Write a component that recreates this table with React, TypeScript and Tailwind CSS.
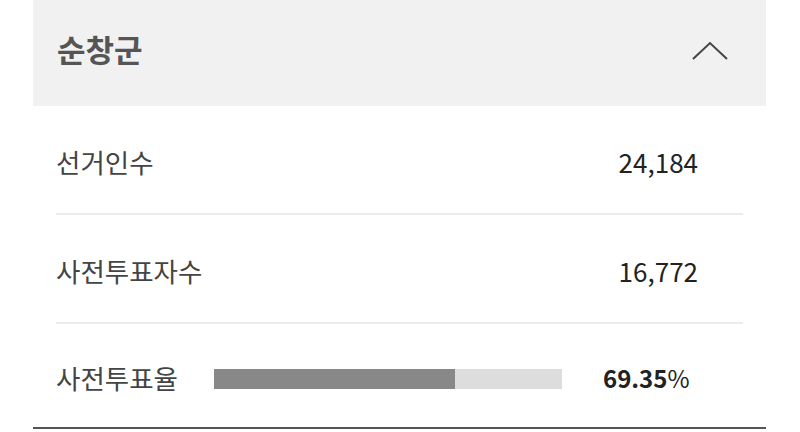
import React from "react";

const font = { fontFamily: '"Noto Sans CJK KR", "Noto Sans", sans-serif' };

function Row({ label, value }: { label: string; value: string }) {
  return (
    <div className="mx-[23px] flex h-[109px] items-center justify-between border-b-2 border-[#ececec] pt-[4px]">
      <span className="text-[26.5px] text-[#444]">{label}</span>
      <span className="mr-[45px] text-[26px] text-[#222]">{value}</span>
    </div>
  );
}

export default function App() {
  return (
    <div className="h-[432px] w-[800px] bg-white" style={font}>
      <div className="ml-[33px] w-[733px]">
        <div className="flex h-[106px] items-center justify-between bg-[#f1f1f1] pb-[8px] pl-[24px] pr-[38px]">
          <span className="text-[31px] font-bold text-[#555]">순창군</span>
          <svg width="36" height="20" viewBox="0 0 36 20" fill="none" className="mt-[4px]">
            <path d="M1 18 L18 2 L35 18" stroke="#444" strokeWidth="2" />
          </svg>
        </div>
        <Row label="선거인수" value="24,184" />
        <Row label="사전투표자수" value="16,772" />
        <div className="border-b-2 border-[#555]">
          <div className="mx-[23px] flex h-[103px] items-center pt-[4px]">
            <span className="w-[158px] text-[26.5px] text-[#444]">사전투표율</span>
            <div className="mt-[3px] flex h-[20px] w-[348px] bg-[#dddddd]">
              <div className="h-full bg-[#888888]" style={{ width: "69.35%" }} />
            </div>
            <span className="ml-[41px] text-[24px] text-[#222]">
              <span className="font-bold">69.35</span>%
            </span>
          </div>
        </div>
      </div>
    </div>
  );
}
